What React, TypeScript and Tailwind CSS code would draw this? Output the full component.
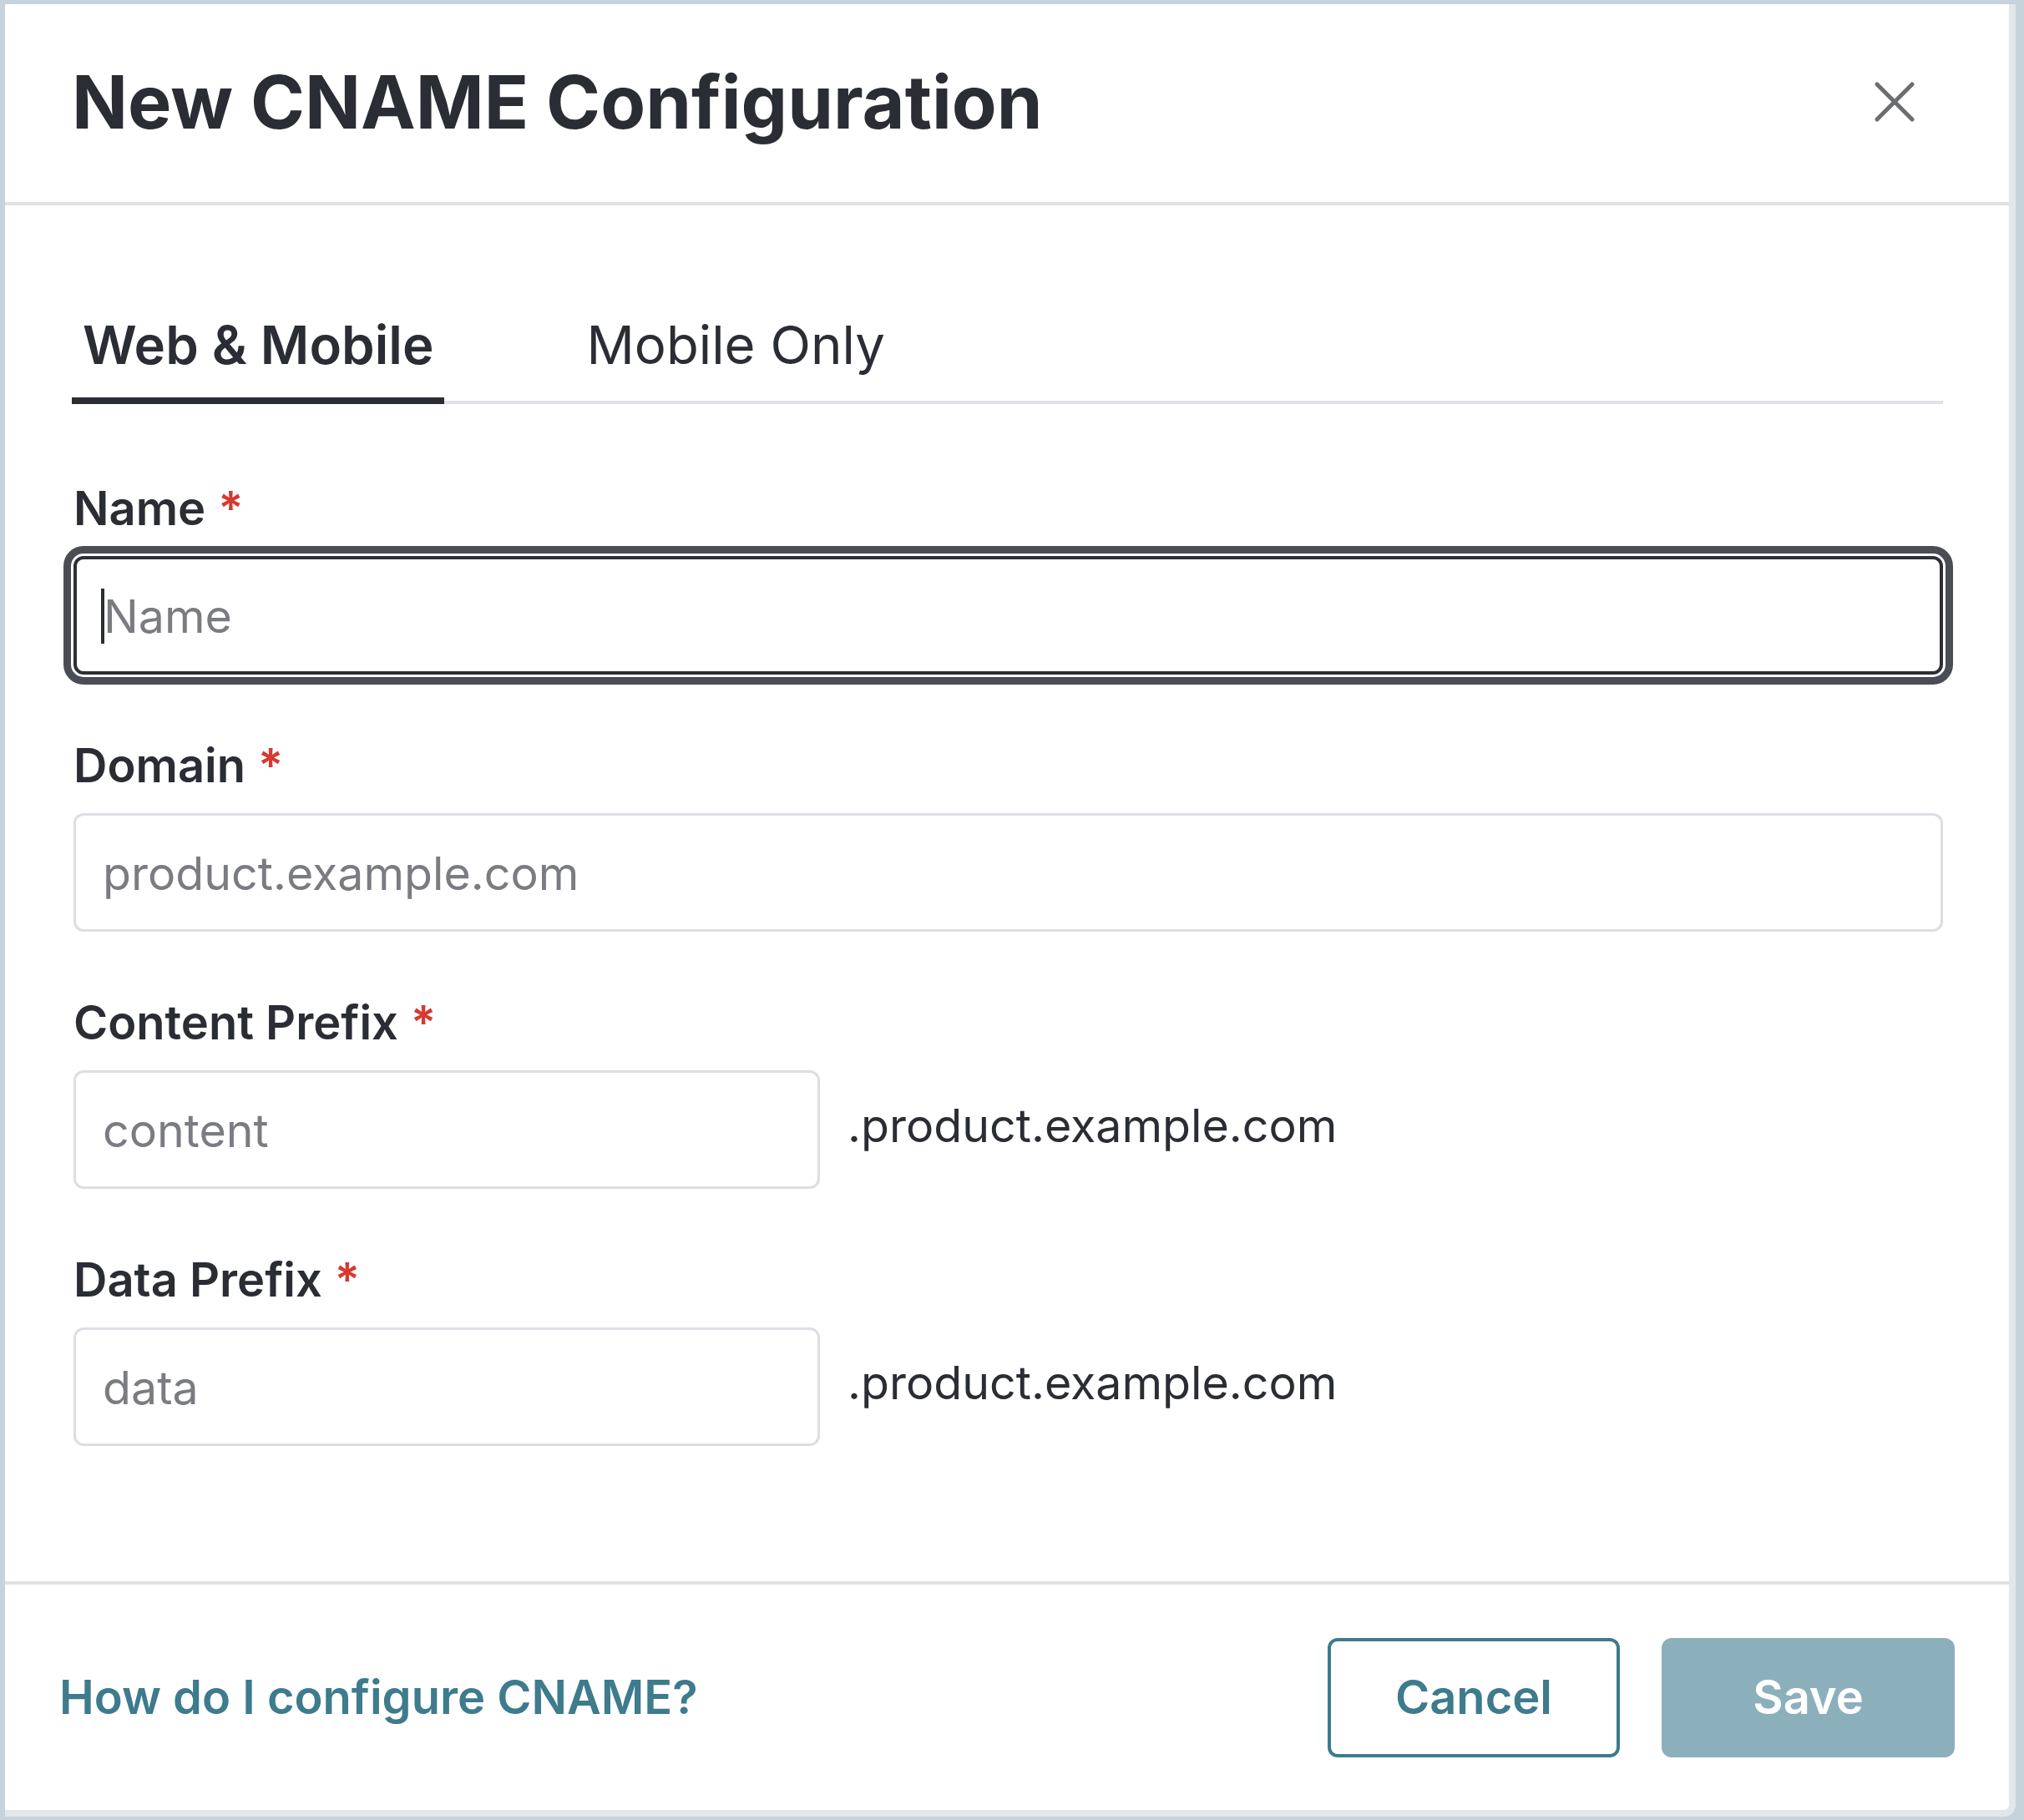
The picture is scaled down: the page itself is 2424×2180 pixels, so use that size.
import { useState } from 'react'

const FONT = "font-['Inter','Noto_Sans',sans-serif]"

function CloseIcon() {
  return (
    <svg width="48" height="48" viewBox="0 0 48 48" fill="none" aria-hidden>
      <path d="M3 3L45 45M45 3L3 45" stroke="#6b6d73" strokeWidth="5" strokeLinecap="round" />
    </svg>
  )
}

function Label({ children }: { children: string }) {
  return (
    <label className="mb-[24px] block text-[56px] font-semibold leading-[65px] text-[#2b2d34]">
      {children}
      <span className="ml-[15px] text-[#d63a30]">*</span>
    </label>
  )
}

function Field({ label, placeholder, focused }: { label: string; placeholder: string; focused?: boolean }) {
  return (
    <div>
      <Label>{label}</Label>
      <div className="relative">
        <input
          placeholder={placeholder}
          className={
            focused
              ? 'block h-[142px] w-full rounded-[12px] border-[4px] border-[#2d2f36] bg-white pl-[32px] text-[55.5px] text-[#2b2d34] outline-none ring-[9px] ring-[#4b4d55] ring-offset-[3px] ring-offset-white placeholder:text-[#7a7c82]'
              : 'block h-[142px] w-full rounded-[12px] border-[3px] border-[#dcdee4] bg-white pl-[32px] text-[55.5px] text-[#2b2d34] outline-none placeholder:text-[#7a7c82]'
          }
        />
        {focused && <span className="absolute left-[33px] top-[39px] h-[66px] w-[4px] bg-[#2b2d34]" />}
      </div>
    </div>
  )
}

function PrefixField({ label, placeholder }: { label: string; placeholder: string }) {
  return (
    <div>
      <Label>{label}</Label>
      <div className="flex items-center">
        <input
          placeholder={placeholder}
          className="block h-[142px] w-[894px] rounded-[12px] border-[3px] border-[#dcdee4] bg-white pl-[32px] text-[55.5px] text-[#2b2d34] outline-none placeholder:text-[#7a7c82]"
        />
        <span className="mb-[10px] ml-[33px] text-[55.5px] leading-[66px] text-[#2b2d34]">.product.example.com</span>
      </div>
    </div>
  )
}

export default function App() {
  const [tab, setTab] = useState('web')

  return (
    <div className={`${FONT} h-[2180px] w-full overflow-hidden bg-[#c6d3da] pl-[6px] pt-[5px]`}>
      <div className="flex h-[2171px] w-[2408px] flex-col rounded-br-[14px] border-b-[8px] border-r-[8px] border-[#e3e6eb] bg-white">
        <header className="flex h-[241px] shrink-0 items-center justify-between border-b-[4px] border-[#dfe1e6] pb-[4px] pl-[80px] pr-[113px]">
          <h1 className="text-[88px] font-bold leading-[106px] text-[#2b2d34]">New CNAME Configuration</h1>
          <button className="flex items-center justify-center">
            <CloseIcon />
          </button>
        </header>

        <div className="flex-1 pl-[82px] pr-[79px] pt-[129px]">
          <div className="flex border-b-[4px] border-[#dfe1e6]">
            <button
              onClick={() => setTab('web')}
              className={`-mb-[4px] -ml-[2px] border-b-[8px] px-[13px] pb-[25px] text-[63.5px] leading-[76px] text-[#2b2d34] ${
                tab === 'web' ? 'border-[#2b2d34] font-semibold' : 'border-transparent font-normal'
              }`}
            >
              Web &amp; Mobile
            </button>
            <button
              onClick={() => setTab('mobile')}
              className={`-mb-[4px] ml-[157px] border-b-[8px] px-[13px] pb-[25px] text-[63.5px] leading-[76px] text-[#2b2d34] ${
                tab === 'mobile' ? 'border-[#2b2d34] font-semibold' : 'border-transparent font-normal'
              }`}
            >
              Mobile Only
            </button>
          </div>

          <form className="mt-[93px] flex flex-col gap-[77px]">
            <Field label="Name" placeholder="Name" focused />
            <Field label="Domain" placeholder="product.example.com" />
            <PrefixField label="Content Prefix" placeholder="content" />
            <PrefixField label="Data Prefix" placeholder="data" />
          </form>
        </div>

        <footer className="flex h-[274px] shrink-0 items-center justify-between border-t-[4px] border-[#dfe1e6] pl-[65px] pr-[65px]">
          <a href="#" className="text-[56px] font-semibold text-[#3d7b8d]">
            How do I configure CNAME?
          </a>
          <div className="flex gap-[50px]">
            <button className="h-[143px] w-[350px] rounded-[12px] border-[4px] border-[#3d7b8d] bg-white text-[56px] font-semibold text-[#3d7b8d]">
              Cancel
            </button>
            <button className="h-[143px] w-[351px] rounded-[12px] bg-[#8cb0bb] text-[56px] font-semibold text-white">
              Save
            </button>
          </div>
        </footer>
      </div>
    </div>
  )
}
